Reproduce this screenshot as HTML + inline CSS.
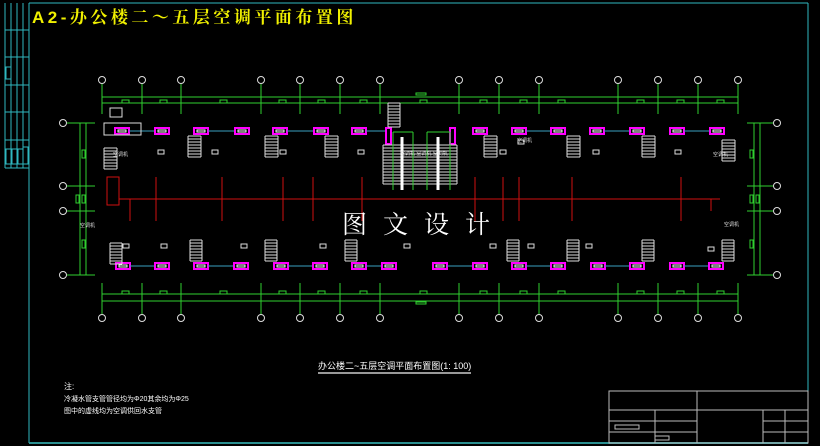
<!DOCTYPE html>
<html><head><meta charset="utf-8">
<style>
html,body{margin:0;padding:0;background:#000;width:820px;height:446px;overflow:hidden}
svg{display:block}
text{font-family:"Liberation Sans","Noto Sans CJK SC",sans-serif}
</style></head><body>
<svg id="s" width="820" height="446" viewBox="0 0 820 446" xmlns="http://www.w3.org/2000/svg">
<rect width="820" height="446" fill="#000"/>
<g stroke="#2fb8c0" fill="none" stroke-width="1">
<line x1="29" y1="3" x2="808" y2="3"/>
<line x1="29" y1="3" x2="29" y2="443"/>
<line x1="808" y1="3" x2="808" y2="443"/>
<line x1="29" y1="443" x2="808" y2="443" stroke="#2a8f90" stroke-width="2"/>
<line x1="5" y1="3" x2="5" y2="168"/><line x1="11" y1="3" x2="11" y2="168"/><line x1="17" y1="3" x2="17" y2="168"/><line x1="23" y1="3" x2="23" y2="168"/>
<line x1="5" y1="30" x2="29" y2="30"/><line x1="5" y1="57" x2="29" y2="57"/><line x1="5" y1="85" x2="29" y2="85"/><line x1="5" y1="112" x2="29" y2="112"/><line x1="5" y1="140" x2="29" y2="140"/><line x1="5" y1="168" x2="29" y2="168"/>
<rect x="6" y="67" width="5" height="12"/>
<rect x="6" y="149" width="5" height="15"/><rect x="12" y="149" width="5" height="15"/><rect x="18" y="149" width="5" height="15"/><rect x="23" y="147" width="5" height="17"/>
</g>
<text x="32" y="23" fill="#f0f000" font-size="17" font-weight="bold" letter-spacing="3.5" style="font-family:'Liberation Sans','Noto Serif CJK SC',serif">A2-办公楼二～五层空调平面布置图</text>
<g id="g"></g>
<text x="342" y="233" fill="#fff" font-size="25" letter-spacing="16" style="font-family:'Noto Serif CJK SC',serif">图文设计</text>
<text x="318" y="369" fill="#fff" font-size="9">办公楼二~五层空调平面布置图(1: 100)</text>
<line x1="318" y1="373" x2="471" y2="373" stroke="#ccc" stroke-width="1.5"/>
<text x="64" y="389" fill="#fff" font-size="8">注:</text>
<text x="64" y="401" fill="#fff" font-size="7">冷凝水管支管管径均为Φ20其余均为Φ25</text>
<text x="64" y="413" fill="#fff" font-size="7">图中的虚线均为空调供回水支管</text>
<g stroke="#bbb" fill="none" stroke-width="1">
<rect x="609" y="391" width="199" height="52"/>
<line x1="609" y1="410" x2="808" y2="410"/>
<line x1="697" y1="391" x2="697" y2="443"/>
<line x1="655" y1="410" x2="655" y2="443"/>
<line x1="609" y1="421" x2="697" y2="421"/><line x1="609" y1="432" x2="697" y2="432"/>
<line x1="763" y1="410" x2="763" y2="443"/><line x1="785" y1="410" x2="785" y2="443"/>
<line x1="763" y1="421" x2="808" y2="421"/><line x1="763" y1="432" x2="808" y2="432"/>
<rect x="615" y="425" width="24" height="4"/><rect x="655" y="436" width="14" height="4"/>
</g>
<text x="113" y="156" fill="#ddd" font-size="5">空调机</text>
<text x="80" y="227" fill="#ddd" font-size="5">空调机</text>
<text x="713" y="156" fill="#ddd" font-size="5">空调机</text>
<text x="724" y="226" fill="#ddd" font-size="5">空调机</text>
<text x="517" y="142" fill="#ddd" font-size="5">空调机</text>
<text x="400" y="155" fill="#ddd" font-size="5">空调机 空调机 空调机</text>
</svg>
<script>
(function(){
var gg=document.getElementById('g'),h='';
function L(a,b,c,d,col,w){h+='<line x1="'+a+'" y1="'+b+'" x2="'+c+'" y2="'+d+'" stroke="'+col+'" stroke-width="'+(w||1)+'"/>';}
function R(x,y,w,hh,col,f,sw){h+='<rect x="'+x+'" y="'+y+'" width="'+w+'" height="'+hh+'" stroke="'+col+'" fill="'+(f||'none')+'" stroke-width="'+(sw||1)+'"/>';}
function C(x,y){h+='<circle cx="'+x+'" cy="'+y+'" r="3.5" stroke="#ddd" fill="none"/>';}
var G='#30d030',RD='#d01010',W='#ddd',P='#ff00ff';
var xs=[102,142,181,261,300,340,380,459,499,539,618,658,698,738];
xs.forEach(function(x){C(x,80);L(x,84,x,114,G);C(x,318);L(x,283,x,314,G);});
L(102,97,738,97,G);L(102,103,738,103,G);L(102,294,738,294,G);L(102,301,738,301,G);
[122,160,220,279,318,360,420,480,520,558,637,677,717].forEach(function(x){R(x,100,7,3,G);R(x,291,7,3,G);});
R(416,93,10,2,G);R(416,302,10,2,G);
[123,186,211,275].forEach(function(y){C(63,y);L(67,y,95,y,G);C(777,y);L(747,y,773,y,G);});
L(80,123,80,275,G);L(86,123,86,275,G);L(754,123,754,275,G);L(760,123,760,275,G);
R(82,150,3,8,G);R(76,195,3,8,G);R(82,195,3,8,G);R(82,240,3,8,G);
R(750,150,3,8,G);R(750,195,3,8,G);R(756,195,3,8,G);R(750,240,3,8,G);
R(107,177,12,28,RD);L(119,199,720,199,RD);
[156,222,283,313,362,475,519,572,681].forEach(function(x){L(x,177,x,221,RD);});
L(130,199,130,221,RD);L(711,199,711,211,RD);L(503,177,503,221,RD);
var tp=[115,155,194,235,273,314,352,473,512,551,590,630,670,710];
tp.forEach(function(x,i){R(x,128,14,6,P,'#000',2);R(x+3,130,8,2,'#fff');if(i%2==0)L(x+14,131,x+40,131,'#3aa0c0');});
var bt=[116,155,194,234,274,313,352,382,433,473,512,551,591,630,670,709];
bt.forEach(function(x,i){R(x,263,14,6,P,'#000',2);R(x+3,265,8,2,'#fff');if(i%2==0)L(x+14,266,x+40,266,'#3aa0c0');});
R(386,128,5,16,P,'#000',2);R(450,128,5,16,P,'#000',2);
function S(x,y,w,n){for(var k=0;k<=n;k++)L(x,y+k*3,x+w,y+k*3,W);L(x,y,x,y+n*3,W);L(x+w,y,x+w,y+n*3,W);}
[[188,136],[265,136],[325,136],[484,136],[567,136],[642,136],[722,140],[104,148]].forEach(function(p){S(p[0],p[1],13,7);});
[[190,240],[265,240],[345,240],[507,240],[567,240],[642,240],[722,240],[110,243]].forEach(function(p){S(p[0],p[1],12,7);});
S(388,103,12,8);S(383,145,74,13);
L(402,137,402,190,'#fff',3);L(438,137,438,190,'#fff',3);
L(393,132,393,190,G);L(413,132,413,190,G);L(427,132,427,190,G);L(450,132,450,190,G);
L(393,132,413,132,G);L(427,132,450,132,G);
R(104,123,37,12,W);R(110,108,12,9,W);
[[158,150],[212,150],[280,150],[358,150],[500,150],[518,140],[593,150],[675,150]].forEach(function(p){R(p[0],p[1],6,4,W);});
[[123,244],[161,244],[241,244],[320,244],[404,244],[490,244],[528,244],[586,244],[708,247]].forEach(function(p){R(p[0],p[1],6,4,W);});
gg.innerHTML=h;
})();
</script>
</body></html>
